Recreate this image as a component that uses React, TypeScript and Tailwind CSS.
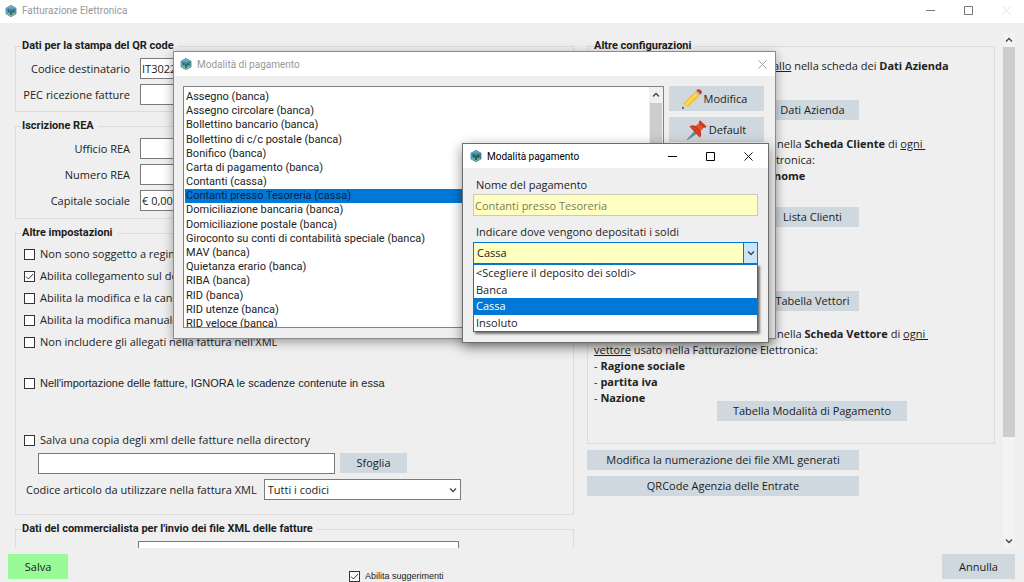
import React from "react";

const fieldBox = "h-[21px] border border-[#7a7a7a] bg-white px-px text-[11px] text-[#222]";
const greyButton = "bg-[#cfd8de] text-center text-[#1c1c1c]";
const windowTitle = "flex-1 pt-px pl-[5px] font-['Roboto',sans-serif] text-[10px]";

function AppIcon({ faded = false }: { faded?: boolean }) {
  return (
    <svg viewBox="0 0 24 24" className={faded ? "size-3 shrink-0 opacity-90" : "size-3 shrink-0"} aria-hidden="true">
      <path d="M12 0 22.5 6v12L12 24 1.5 18V6z" fill="#3c7fa3" />
      <path d="M12 0 22.5 6 12 12 1.5 6z" fill="#5c9fc0" />
      <path d="M12 12 22.5 6v12L12 24z" fill="#3a7f98" />
      <path d="M1.5 6 12 12v12L1.5 18z" fill="#4796c2" />
      <path d="M3 15l9 3 9-3v4l-9 5-9-5z" fill="#6fae86" />
      <path d="M5 8c3-2 5-1 7 1 2-2 4-3 7-1l-1 7-4-2-.5 7h-3L10 13l-4 2z" fill="#1d5563" />
      <path d="M6 8c2.500-1 4 0 6 2 2-2 3.500-3 6-2l-6 4z" fill="#4aa48c" />
    </svg>
  );
}

function Chevron({ up = false, className = "" }: { up?: boolean; className?: string }) {
  return (
    <svg viewBox="0 0 8 6" className={`h-1.5 w-2 ${className}`} fill="none" stroke="currentColor" aria-hidden="true">
      <path d={up ? "M1 4.5 4 1.5 7 4.5" : "M1 1.5 4 4.5 7 1.5"} strokeWidth="1.3" />
    </svg>
  );
}

function CloseIcon() {
  return (
    <svg viewBox="0 0 10 10" className="size-[9px]" fill="none" stroke="currentColor" aria-hidden="true">
      <path d="M.5.5l9 9M9.500.5l-9 9" />
    </svg>
  );
}

function MinimizeIcon() {
  return (
    <svg viewBox="0 0 9 9" className="size-[9px]" fill="none" stroke="currentColor" aria-hidden="true">
      <path d="M0 4.500h9" />
    </svg>
  );
}

function MaximizeIcon() {
  return (
    <svg viewBox="0 0 9 9" className="size-[9px]" fill="none" stroke="currentColor" aria-hidden="true">
      <path d="M.5.5h8v8h-8z" />
    </svg>
  );
}

function PencilIcon() {
  return (
    <svg viewBox="0 0 20 20" className="size-5 shrink-0" aria-hidden="true">
      <path d="M0 20 1.500 14.500 5.500 18.300z" fill="#f0d2a8" />
      <path d="M0 20 .7 17.600 2.400 19.300z" fill="#333" />
      <path d="M1.500 14.500 13 2.800 17.300 6.900 5.500 18.300z" fill="#f9bd2c" />
      <path d="M2.600 15.200 13.700 3.900 15.700 5.800 4.500 17.200z" fill="#fdd84e" />
      <path d="M13 2.800 14.300 1.500 18.600 5.600 17.300 6.900z" fill="#b9c0c4" />
      <path d="M14.300 1.500C15.500 0 17.400-.2 18.900 1.200S20 4.400 18.600 5.600z" fill="#c93a25" />
    </svg>
  );
}

function PinIcon() {
  return (
    <svg viewBox="0 0 20 20" className="size-5 shrink-0" aria-hidden="true">
      <path d="M7.500 11.500 0 20l9.500-6.500z" fill="#6f8790" stroke="#6f8790" />
      <path d="M2.500 6.500c2-1.500 4.300-1.400 6.300-.4L12 3.600C11.700 2.300 12 1 13 .3l6.700 6.200c-.7 1.300-2 1.600-3.500 1.200L13.600 11c1 2.200.8 4.800-.8 6.800z" fill="#cf3a1e" />
      <path d="M8.800 6.100 12 3.600l4.200 4.100-2.600 3.300z" fill="#e4512c" />
      <path d="M4.500 7c3 .5 7 4.500 8 8" fill="none" stroke="#e4512c" />
    </svg>
  );
}

function Tick({ label, checked = false, className = "" }: { label: string; checked?: boolean; className?: string }) {
  return (
    <label className={`flex items-center gap-[5px] whitespace-nowrap ${className}`}>
      <span className="grid shrink-0">
        <input
          type="checkbox"
          defaultChecked={checked}
          className="peer col-start-1 row-start-1 size-[11px] appearance-none border border-[#333] bg-white"
        />
        <svg
          viewBox="0 0 11 11"
          className="pointer-events-none invisible col-start-1 row-start-1 size-[11px] peer-checked:visible"
          fill="none"
          stroke="#333"
          aria-hidden="true"
        >
          <path d="M2 5.500 4.500 8 9 3" />
        </svg>
      </span>
      {label}
    </label>
  );
}

function Group({ title, className = "", children }: { title: string; className?: string; children: React.ReactNode }) {
  return (
    <fieldset className={`min-w-0 border border-[#dcdcdc] px-1.5 pt-1 ${className}`}>
      <legend className="h-4 pr-1 font-['Roboto',sans-serif] leading-4 font-bold text-[#1c1c1c]">{title}</legend>
      {children}
    </fieldset>
  );
}

function Field({ id, label, value = "" }: { id: string; label: string; value?: string }) {
  return (
    <div className="flex items-center gap-2.5">
      <label htmlFor={id} className="w-[108px] text-right">
        {label}
      </label>
      <input id={id} defaultValue={value} className={`w-40 ${fieldBox}`} />
    </div>
  );
}

function PartyNote({ lead, record, rest, children }: { lead: string; record: string; rest: string; children: React.ReactNode }) {
  return (
    <div>
      <p>
        <span className="inline-block w-[183px] whitespace-nowrap">{lead}</span>nella <b>{record}</b> di <u>ogni&nbsp;</u>
      </p>
      <p>
        <u>{rest}</u> usato nella Fatturazione Elettronica:
      </p>
      {children}
    </div>
  );
}

const payments = [
  "Assegno (banca)",
  "Assegno circolare (banca)",
  "Bollettino bancario (banca)",
  "Bollettino di c/c postale (banca)",
  "Bonifico (banca)",
  "Carta di pagamento (banca)",
  "Contanti (cassa)",
  "Contanti presso Tesoreria (cassa)",
  "Domiciliazione bancaria (banca)",
  "Domiciliazione postale (banca)",
  "Giroconto su conti di contabilità speciale (banca)",
  "MAV (banca)",
  "Quietanza erario (banca)",
  "RIBA (banca)",
  "RID (banca)",
  "RID utenze (banca)",
  "RID veloce (banca)",
];

const deposits = ["<Scegliere il deposito dei soldi>", "Banca", "Cassa", "Insoluto"];

function PaymentList() {
  return (
    <section
      role="dialog"
      aria-label="Modalità di pagamento"
      className="absolute top-[51px] left-[173px] flex h-[288px] w-[603px] flex-col border border-[#8c8c8c] bg-[#efefef] shadow-[0_3px_10px_rgba(0,0,0,0.35)]"
    >
      <header className="flex h-6 shrink-0 items-center bg-white pr-2 pl-1.5 text-[#999]">
        <AppIcon faded />
        <h2 className={windowTitle}>Modalità di pagamento</h2>
        <button aria-label="Chiudi">
          <CloseIcon />
        </button>
      </header>
      <div className="flex min-h-0 flex-1 gap-[5px] pt-2.5 pr-[11px] pb-2.5 pl-[9px]">
        <div className="flex min-w-0 flex-1 overflow-hidden border border-[#828282] bg-white">
          <ul
            role="listbox"
            aria-label="Pagamenti"
            className="mt-[3px] ml-px grid h-[241px] flex-1 auto-rows-fr font-['Roboto',sans-serif]"
          >
            {payments.map((p) => (
              <li
                key={p}
                role="option"
                aria-selected={p === "Contanti presso Tesoreria (cassa)"}
                className="flex items-center pl-px leading-3 text-[#222] aria-selected:bg-[#0078d7] aria-selected:text-[#0c2340]"
              >
                {p}
              </li>
            ))}
          </ul>
          <div className="flex w-3.5 flex-col items-center bg-[#f0f0f0] text-[#444]">
            <Chevron up className="my-[5px] shrink-0" />
            <div className="h-40 w-3 bg-[#cdcdcd]" />
          </div>
        </div>
        <div className="flex w-[95px] flex-col gap-1.5">
          <button className={`flex h-[25px] items-center justify-center gap-0.5 pt-px pr-1 ${greyButton}`}>
            <PencilIcon />
            Modifica
          </button>
          <button className={`flex h-[25px] items-center justify-center gap-0.5 pt-px ${greyButton}`}>
            <PinIcon />
            Default
          </button>
        </div>
      </div>
    </section>
  );
}

function PaymentEditor() {
  return (
    <section
      role="dialog"
      aria-label="Modalità pagamento"
      className="absolute top-[143px] left-[462px] w-[307px] border border-[#6e6e6e] bg-[#efefef] pb-2.5 shadow-[0_4px_12px_rgba(0,0,0,0.45)]"
    >
      <header className="flex h-6 items-center bg-white pr-[15px] pl-[7px] text-black">
        <AppIcon />
        <h2 className={windowTitle}>Modalità pagamento</h2>
        <div className="flex gap-[29px]">
          <button aria-label="Riduci">
            <MinimizeIcon />
          </button>
          <button aria-label="Ingrandisci">
            <MaximizeIcon />
          </button>
          <button aria-label="Chiudi">
            <CloseIcon />
          </button>
        </div>
      </header>
      <div className="flex flex-col px-2.5 pt-[9px]">
        <label htmlFor="nome" className="pl-[3px]">
          Nome del pagamento
        </label>
        <input
          id="nome"
          readOnly
          value="Contanti presso Tesoreria"
          className="mt-px h-[22px] border border-[#c9c9b4] bg-[#ffffc1] px-px text-[#7c7c62]"
        />
        <label htmlFor="deposito" className="mt-2 pl-[3px]">
          Indicare dove vengono depositati i soldi
        </label>
        <div className="mt-0.5 flex h-[22px] border border-[#0078d7]">
          <select id="deposito" defaultValue="Cassa" className="min-w-0 flex-1 appearance-none bg-[#ffffc1] px-[3px] text-[#222]">
            <option>Cassa</option>
            <option>Banca</option>
          </select>
          <span className="flex w-3.5 items-center justify-center border-l border-[#0078d7] bg-[#cce4f7] text-[#444]">
            <Chevron />
          </span>
        </div>
        <ul
          role="listbox"
          aria-label="Depositi"
          className="grid h-[68px] auto-rows-fr border border-[#0078d7] bg-white shadow-[2px_2px_2px_rgba(0,0,0,0.5)]"
        >
          {deposits.map((d) => (
            <li
              key={d}
              role="option"
              aria-selected={d === "Cassa"}
              className="flex items-center pl-0.5 leading-4 text-[#222] aria-selected:bg-[#0078d7] aria-selected:text-white"
            >
              {d}
            </li>
          ))}
        </ul>
      </div>
    </section>
  );
}

export default function App() {
  return (
    <div className="relative flex h-screen flex-col overflow-hidden bg-[#efefef] font-['Open_Sans',sans-serif] text-[11px] leading-4 text-[#222]">
      <header className="flex h-[23px] shrink-0 items-center bg-white pr-[13px] pb-0.5 pl-[5px] text-[#999]">
        <AppIcon faded />
        <h1 className={windowTitle}>Fatturazione Elettronica</h1>
        <div className="flex gap-[29px] text-[#777]">
          <button aria-label="Riduci">
            <MinimizeIcon />
          </button>
          <button aria-label="Ingrandisci">
            <MaximizeIcon />
          </button>
          <button aria-label="Chiudi" className="text-[#ddd]">
            <CloseIcon />
          </button>
        </div>
      </header>

      <main className="flex min-h-0 flex-1 overflow-hidden pr-[9px] pl-[15px]">
        <div className="flex min-w-0 flex-1 flex-col gap-1.5 pt-[15px]">
          <Group title="Dati per la stampa del QR code" className="pb-1.5">
            <div className="flex flex-col gap-[5px]">
              <Field id="codice" label="Codice destinatario" value="IT3022" />
              <Field id="pec" label="PEC ricezione fatture" />
            </div>
          </Group>
          <Group title="Iscrizione REA" className="pb-[7px]">
            <div className="flex flex-col gap-[5px]">
              <Field id="ufficio" label="Ufficio REA" />
              <Field id="numero" label="Numero REA" />
              <Field id="capitale" label="Capitale sociale" value="€ 0,00" />
            </div>
          </Group>
          <Group title="Altre impostazioni" className="pb-3.5">
            <div className="-mt-0.5 flex flex-col pl-0.5">
              <Tick className="h-[22px]" label="Non sono soggetto a regime" />
              <Tick className="h-[22px]" label="Abilita collegamento sul documento" checked />
              <Tick className="h-[22px]" label="Abilita la modifica e la cancellazione" />
              <Tick className="h-[22px]" label="Abilita la modifica manuale" />
              <Tick className="h-[22px]" label="Non includere gli allegati nella fattura nell'XML" />
              <Tick
                className="mt-[19px] h-[22px] font-['Liberation_Sans',sans-serif]"
                label="Nell'importazione delle fatture, IGNORA le scadenze contenute in essa"
              />
              <Tick className="mt-[35px] h-[22px]" label="Salva una copia degli xml delle fatture nella directory" />
            </div>
            <div className="mt-0.5 flex gap-[5px] pl-4">
              <input aria-label="Directory" className={`w-[297px] ${fieldBox}`} />
              <button className={`h-5 w-[67px] ${greyButton}`}>Sfoglia</button>
            </div>
            <div className="mt-[5px] flex items-center gap-[7px] pl-1">
              <label htmlFor="articolo">Codice articolo da utilizzare nella fattura XML</label>
              <div className="grid w-[197px] items-center">
                <select id="articolo" className={`col-start-1 row-start-1 appearance-none pl-[3px] ${fieldBox}`}>
                  <option>Tutti i codici</option>
                </select>
                <Chevron className="pointer-events-none col-start-1 row-start-1 mr-1 justify-self-end text-[#444]" />
              </div>
            </div>
          </Group>
          <Group title="Dati del commercialista per l'invio dei file XML delle fatture" className="pb-10">
            <input aria-label="Commercialista" className={`ml-[116px] block w-[321px] ${fieldBox}`} />
          </Group>
        </div>

        <div className="ml-[13px] w-[408px] shrink-0 pt-[15px]">
          <Group title="Altre configurazioni" className="pb-[22px]">
            <p className="whitespace-nowrap">
              <span className="inline-block w-[179px] text-right">
                Controllare il <u>cap</u>
              </span>
              <u>allo</u> nella scheda dei <b>Dati Azienda</b>
            </p>
            <button className={`mt-[26px] ml-[172px] block h-5 w-[93px] ${greyButton}`}>Dati Azienda</button>
            <div className="mt-4">
              <PartyNote lead="Inserire i seguenti dati" record="Scheda Cliente" rest="cliente">
                <p>
                  <span className="inline-block w-[180px] text-right">
                    - <b>Ragione sociale o Cog</b>
                  </span>
                  <b>nome</b>
                </p>
              </PartyNote>
            </div>
            <button className={`mt-[23px] ml-[172px] block h-5 w-[93px] ${greyButton}`}>Lista Clienti</button>
            <button className={`mt-16 ml-[172px] block h-5 w-[93px] ${greyButton}`}>Tabella Vettori</button>
            <div className="mt-[15px]">
              <PartyNote lead="Inserire i seguenti dati" record="Scheda Vettore" rest="vettore">
                <p>
                  - <b>Ragione sociale</b>
                </p>
                <p>
                  - <b>partita iva</b>
                </p>
                <p>
                  - <b>Nazione</b>
                </p>
              </PartyNote>
            </div>
            <button className={`-mt-[5px] ml-[123px] block h-5 w-[190px] ${greyButton}`}>Tabella Modalità di Pagamento</button>
          </Group>
          <div className="mt-1.5 flex w-[272px] flex-col gap-1.5">
            <button className={`h-5 ${greyButton}`}>Modifica la numerazione dei file XML generati</button>
            <button className={`h-5 ${greyButton}`}>QRCode Agenzia delle Entrate</button>
          </div>
        </div>

        <div className="mt-2.5 ml-2 flex w-3 flex-col items-center bg-[#f3f3f3] text-[#444]">
          <Chevron up className="my-1 shrink-0" />
          <div className="h-[390px] w-full shrink-0 bg-[#cdcdcd]" />
          <Chevron className="mt-auto mb-1 shrink-0" />
        </div>
      </main>

      <footer className="flex h-[34px] shrink-0 pt-1.5 pr-[9px] pl-2">
        <button className="h-[25px] w-[60px] bg-[#98fb98] text-[#1c1c1c]">Salva</button>
        <Tick
          className="ml-[281px] h-3 flex-1 self-end font-['Liberation_Sans',sans-serif] text-[9px]"
          label="Abilita suggerimenti"
          checked
        />
        <button className={`h-[25px] w-[73px] ${greyButton}`}>Annulla</button>
      </footer>

      <PaymentList />
      <PaymentEditor />
    </div>
  );
}
